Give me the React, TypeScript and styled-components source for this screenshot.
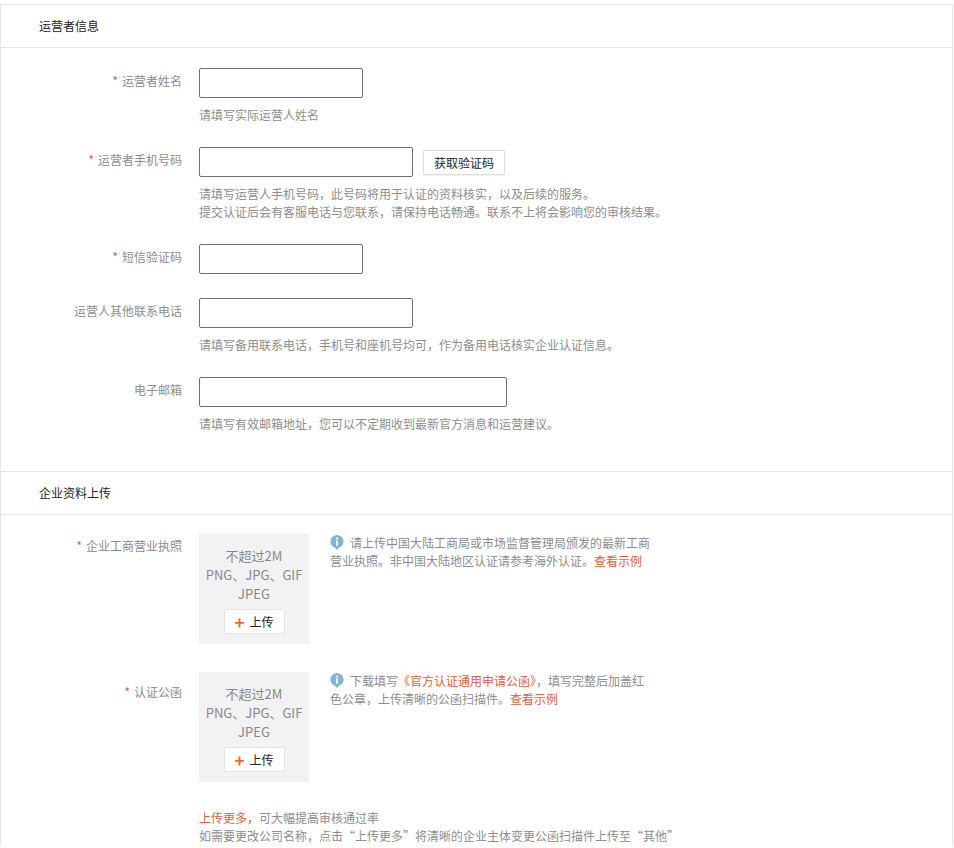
import React from "react";
import styled, { createGlobalStyle } from "styled-components";

const G = createGlobalStyle`
  body { margin: 0; background: #fff; font-family: "Noto Sans CJK SC", "Liberation Sans", sans-serif; font-size: 12px; color: #333; }
`;
const Card = styled.div`
  margin-top: 4px; border-left: 1px solid #e7e7eb; border-top: 1px solid #e7e7eb; border-right: 1px solid #e7e7eb; width: 953px; box-sizing: border-box;
`;
const Head = styled.div`
  height: 42px; line-height: 42px; padding-left: 38px; border-bottom: 1px solid #e7e7eb; color: #222; font-size: 12px;
`;
const Body = styled.div<{ $pt: number; $pb: number }>`
  padding: ${p => p.$pt}px 0 ${p => p.$pb}px; display: flex; flex-direction: column;
  border-bottom: 1px solid #e7e7eb;
`;
const Section = styled.div` padding-top: 19px; display: flex; flex-direction: column; `;
const Row = styled.div<{ $mb: number }>`
  display: flex; margin-bottom: ${p => p.$mb}px;
`;
const Label = styled.div<{ $pt: number }>`
  width: 181px; text-align: right; color: #8d8d8d; line-height: 18px; padding-top: ${p => p.$pt}px; box-sizing: border-box;
`;
const Star = styled.span` color: #e15f3f; margin-right: 4px; `;
const Field = styled.div<{ $row?: boolean }>` margin-left: 17px; display: flex; flex-direction: ${p => (p.$row ? "row" : "column")}; `;
const Line = styled.div` display: flex; align-items: center; gap: 10px; `;
const Input = styled.div<{ $w: number }>`
  width: ${p => p.$w}px; height: 30px; border: 1px solid #6f6f6f; border-radius: 2px; box-sizing: border-box; background: #fff;
`;
const Btn = styled.button`
  height: 25px; width: 82px; border: 1px solid #ddd; background: #fff; border-radius: 2px; font-family: inherit; font-size: 12px; color: #222; box-shadow: 0 1px 1px rgba(0,0,0,.06);
`;
const Hint = styled.div<{ $mt?: number }>` color: #8d8d8d; line-height: 18px; margin-top: ${p => p.$mt ?? 8}px; `;
const Upload = styled.div`
  width: 110px; height: 110px; background: #f2f2f4; display: flex; flex-direction: column; align-items: center; padding-top: 12px; box-sizing: border-box;
  color: #888; font-size: 13px; line-height: 19px; text-align: center;
`;
const UpBtn = styled.div`
  margin-top: 6px; width: 61px; height: 25px; background: #fff; border: 1px solid #e4e4e4; border-radius: 2px; box-sizing: border-box;
  display: flex; align-items: center; justify-content: center; gap: 5px; color: #222; font-size: 12px;
`;
const Plus = styled.span` color: #f26a21; font-size: 17px; font-weight: bold; line-height: 1; `;
const Info = styled.div` width: 325px; margin-left: 21px; color: #8d8d8d; line-height: 18px; `;
const Red = styled.span` color: #e15f3f; `;
const Icon = () => (
  <svg width="14" height="15" viewBox="0 0 14 15" style={{ verticalAlign: -2, marginRight: 6 }}>
    <path d="M7 0a6.5 6.5 0 0 0-2 12.7L7 15l2-2.3A6.5 6.5 0 0 0 7 0z" fill="#7fb5da" />
    <rect x="6" y="5.5" width="2" height="5" fill="#fff" />
    <circle cx="7" cy="3.5" r="1.1" fill="#fff" />
  </svg>
);

export default function App() {
  return (
    <>
      <G />
      <Card>
        <Head>运营者信息</Head>
        <Body $pt={20} $pb={38}>
          <Row $mb={23}>
            <Label $pt={4}><Star>*</Star>运营者姓名</Label>
            <Field><Input $w={164} /><Hint>请填写实际运营人姓名</Hint></Field>
          </Row>
          <Row $mb={23}>
            <Label $pt={4}><Star>*</Star>运营者手机号码</Label>
            <Field>
              <Line><Input $w={214} /><Btn>获取验证码</Btn></Line>
              <Hint>请填写运营人手机号码，此号码将用于认证的资料核实，以及后续的服务。<br />提交认证后会有客服电话与您联系，请保持电话畅通。联系不上将会影响您的审核结果。</Hint>
            </Field>
          </Row>
          <Row $mb={24}>
            <Label $pt={4}><Star>*</Star>短信验证码</Label>
            <Field><Input $w={164} /></Field>
          </Row>
          <Row $mb={23}>
            <Label $pt={4}>运营人其他联系电话</Label>
            <Field><Input $w={214} /><Hint>请填写备用联系电话，手机号和座机号均可，作为备用电话核实企业认证信息。</Hint></Field>
          </Row>
          <Row $mb={0}>
            <Label $pt={4}>电子邮箱</Label>
            <Field><Input $w={308} /><Hint>请填写有效邮箱地址，您可以不定期收到最新官方消息和运营建议。</Hint></Field>
          </Row>
        </Body>
        <Head>企业资料上传</Head>
        <Section>
          <Row $mb={28}>
            <Label $pt={3}><Star>*</Star>企业工商营业执照</Label>
            <Field $row>
              <Upload>不超过2M<br />PNG、JPG、GIF<br />JPEG<UpBtn><Plus>+</Plus>上传</UpBtn></Upload>
              <Info><Icon />请上传中国大陆工商局或市场监督管理局颁发的最新工商营业执照。非中国大陆地区认证请参考海外认证。<Red>查看示例</Red></Info>
            </Field>
          </Row>
          <Row $mb={27}>
            <Label $pt={11}><Star>*</Star>认证公函</Label>
            <Field $row>
              <Upload>不超过2M<br />PNG、JPG、GIF<br />JPEG<UpBtn><Plus>+</Plus>上传</UpBtn></Upload>
              <Info><Icon />下载填写<Red>《官方认证通用申请公函》</Red>，填写完整后加盖红色公章，上传清晰的公函扫描件。<Red>查看示例</Red></Info>
            </Field>
          </Row>
          <Row $mb={0}>
            <Label $pt={0} />
            <Field><Hint $mt={0}><Red>上传更多，</Red>可大幅提高审核通过率<br />如需要更改公司名称，点击“上传更多”将清晰的企业主体变更公函扫描件上传至“其他”</Hint></Field>
          </Row>
        </Section>
      </Card>
    </>
  );
}
